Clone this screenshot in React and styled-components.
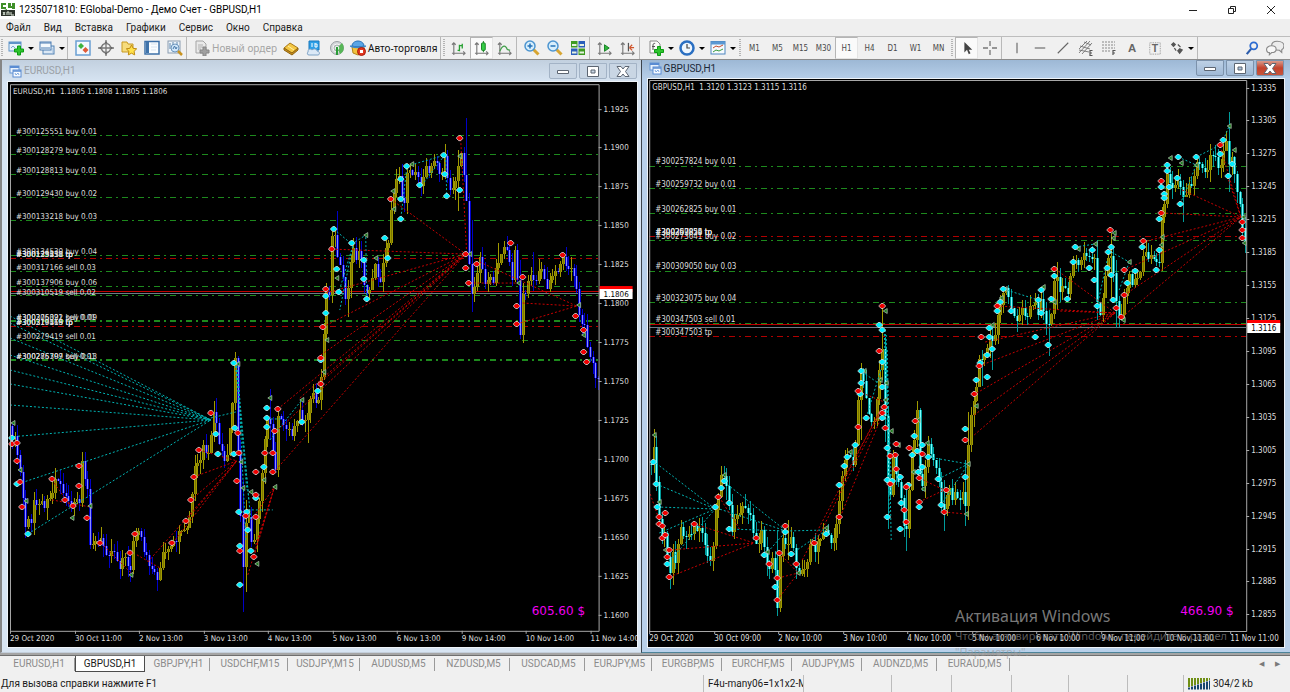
import React from "react";
import styled, { createGlobalStyle, css } from "styled-components";

const GlobalStyle = createGlobalStyle`
  * { box-sizing: border-box; }
  body {
    margin: 0;
    font-family: Roboto, "Noto Sans", sans-serif;
    font-size: 10px;
    color: #1b1b1b;
    background: #f0f0f0;
  }
  button { font: inherit; color: inherit; border: none; background: none; padding: 0; margin: 0; }
`

const Page = styled.div`
  position: relative;
  display: flex;
  flex-direction: column;
  height: 100vh;
  overflow: hidden;
`

const TitleBar = styled.header`
  display: flex;
  align-items: center;
  height: 19px;
  flex: none;
  padding-left: 1px;
  background: #fff;
`

const AppTitle = styled.h1`
  flex: 1;
  margin: 0 0 0 4px;
  font-size: 10px;
  font-weight: normal;
  line-height: 19px;
  color: #000;
`

const CaptionButton = styled.button`
  width: 39px;
  height: 19px;
  display: flex;
  align-items: center;
  justify-content: center;
`

const MenuBar = styled.nav`
  display: flex;
  align-items: center;
  gap: 13px;
  height: 18px;
  flex: none;
  padding-left: 6px;
  background: #efefef;
  border-bottom: 1px solid #bdbdbd;
`

const MenuItem = styled.button`
  line-height: 17px;
`

const ToolBar = styled.div`
  display: flex;
  align-items: stretch;
  height: 23px;
  flex: none;
  padding-right: 4px;
  background: #f0f0f0;
  border-bottom: 1px solid #8c8c8c;
`

const Grip = styled.span`
  width: 4px;
  flex: none;
  margin: 2px 0 2px 1px;
  background: repeating-linear-gradient(#b4b4b4 0 1px, #f0f0f0 1px 2px);
  border-right: 2px solid #f0f0f0;
`

const Sep = styled.span`
  width: ${(p) => p.$width || 4}px;
  flex: none;
  border-left: 1px solid #b9b9b9;
`

const ToolButton = styled.button`
  display: flex;
  align-items: center;
  justify-content: center;
  flex: none;
  width: ${(p) => p.$width || 23}px;
  ${(p) => p.$pressed && css`
    background: #fafafa;
    border: 1px solid #b5b5b5;
    border-right-color: #e4e4e4;
    border-bottom-color: #e4e4e4;
  `}
`

const WideButton = styled(ToolButton)`
  gap: 2px;
  justify-content: flex-start;
  padding-left: 2px;
  font-family: "Noto Sans", sans-serif;
  white-space: nowrap;
  color: ${(p) => (p.disabled ? "#a5a5a5" : "#111")};
`

const Caret = styled.span`
  margin-left: 4px;
  border: 3px solid transparent;
  border-top-color: #000;
  border-bottom: none;
`

const Period = styled(ToolButton)`
  font-family: "DejaVu Sans Condensed", "DejaVu Sans", sans-serif;
  font-size: 8px;
  color: #4a4a4a;
`

const Spacer = styled.span`
  flex: 1;
`

const Desktop = styled.main`
  flex: 1;
  display: flex;
  min-height: 0;
  padding-bottom: 2px;
  background: #a5a5a5;
`

const ChildWindow = styled.section`
  display: flex;
  flex-direction: column;
  min-width: 0;
  flex: ${(p) => (p.$active ? "649 649 0" : "641 641 0")};
  padding: 0 ${(p) => (p.$active ? "6px 5px 6px" : "4px 5px 6px")};
  border-left: ${(p) => (p.$active ? "1px solid #3c444c" : "2px solid #858585")};
  border-bottom: 1px solid ${(p) => (p.$active ? "#4d8499" : "#c4cfdb")};
  background: ${(p) => (p.$active
    ? "linear-gradient(#9db8d5, #b8d0ea 20px, #b8d0ea)"
    : "linear-gradient(#c2d0df, #d7e4f2 22px, #d7e4f2)")};
`

const ChildTitle = styled.div`
  display: flex;
  align-items: ${(p) => (p.$active ? "flex-start" : "center")};
  gap: 2px;
  flex: none;
  height: ${(p) => (p.$active ? 19 : 22)}px;
  color: ${(p) => (p.$active ? "#1d2a38" : "#9aa0a6")};
`

const ChildName = styled.h2`
  flex: 1;
  margin: 0;
  font-size: 10px;
  font-weight: normal;
  line-height: 18px;
`

const ChildIcon = styled.span`
  display: flex;
  padding: ${(p) => (p.$active ? "2px 0 0 1px" : "0 0 0 1px")};
`

const ChildButton = styled.button`
  display: flex;
  align-items: center;
  justify-content: center;
  width: 28px;
  height: 16px;
  border: 1px solid ${(p) => (p.$active ? "#7c92ab" : "#a3b3c6")};
  border-radius: 0 0 2px 2px;
  background: ${(p) => (p.$close
    ? "linear-gradient(#d99a8c, #c3422c 50%, #c8553c)"
    : p.$active ? "linear-gradient(#bdd0e5, #9fb9d6)" : "#c9d6e4")};
`

const ChartSvg = styled.svg`
  display: block;
  flex: 1;
  width: 100%;
  min-height: 0;
  background: #000;
  outline: 1px solid #eef3f8;
  font-family: "DejaVu Sans Condensed", "DejaVu Sans", sans-serif;
  font-size: 8px;
  fill: #dedede;
`

const Profit = styled.text`
  font-family: "DejaVu Sans", sans-serif;
  font-size: 12px;
  fill: #f000f0;
`

const Watermark = styled.aside`
  position: absolute;
  right: 51px;
  bottom: 32px;
  width: 284px;
  font-family: "Noto Sans", sans-serif;
  font-size: 11px;
  line-height: 16px;
  color: rgba(150, 150, 150, 0.62);
  pointer-events: none;

  strong {
    display: block;
    font-size: 16px;
    font-weight: normal;
    line-height: 24px;
    color: rgba(160, 160, 160, 0.75);
  }
`

const TabBar = styled.nav`
  display: flex;
  align-items: stretch;
  flex: none;
  height: 20px;
  padding: 0 5px 3px 1px;
  background: #f0f0f0;
  border-top: 1px solid #6f6f6f;
`

const Tab = styled.button`
  flex: none;
  width: ${(p) => p.$width}px;
  padding-left: 2px;
  color: #8b8b8b;
  line-height: 16px;
  background: linear-gradient(#9a9a9a, #9a9a9a) right 2px / 1px 13px no-repeat;
  ${(p) => p.$active && css`
    padding-left: 0;
    color: #1b1b1b;
    background: #fff;
    border: 1px solid #4c4c4c;
    border-top: none;
  `}
`

const TabArrow = styled.button`
  width: 16px;
  font-size: 7px;
  color: #7a7a7a;
`

const StatusBar = styled.footer`
  display: flex;
  align-items: stretch;
  height: 17px;
  flex: none;
  line-height: 17px;
  background: #f0f0f0;
`

const StatusHint = styled.span`
  flex: 1;
  padding-left: 1px;
`

const StatusCell = styled.span`
  width: ${(p) => p.$width}px;
  flex: none;
  overflow: hidden;
  white-space: nowrap;
  padding-left: 4px;
  border-left: 1px solid #bcbcbc;
`

const Traffic = styled(StatusCell)`
  display: flex;
  align-items: center;
  gap: 3px;
`

/* ---------- icons ---------- */

const Icon = ({ size = 16, children }) => (
  <svg width={size} height={size} viewBox="0 0 16 16" fill="none" aria-hidden="true">{children}</svg>
)

const Plus = ({ x = 0, y = 0 }) => (
  <path transform={`translate(${x} ${y})`} d="M3 0h3v3h3v3H6v3H3V6H0V3h3z" fill="#2fc32f" stroke="#0a9d12" />
)

const NewChart = () => <Icon><rect x="1" y="2" width="12" height="9" fill="#e9f2fb" stroke="#5f93c8" /><path d="M1 3h12" stroke="#5f93c8" strokeWidth="2" /><path d="M3 8l2-2 2 2" stroke="#7da8d0" /><Plus x={6.5} y={6} /></Icon>
const Profiles = () => <Icon><rect x="4" y="6" width="11" height="8" fill="#dbe8f5" stroke="#5383b5" /><rect x="1" y="2" width="11" height="8" fill="#f4f9fd" stroke="#4c7db2" /><path d="M1 3h11M2 8h9" stroke="#4c7db2" /><path d="M14 8v5" stroke="#9cbad8" /></Icon>
const Market = () => <Icon><rect x="1" y="1" width="14" height="14" fill="#f3f8fd" stroke="#6a9fd2" strokeWidth="1.5" /><path d="M6 3l3 3-3 3-3-3z" fill="#3eb33e" /><path d="M10.500 7l3 3-3 3-3-3z" fill="#e05a36" /></Icon>
const DataWindow = () => <Icon><circle cx="8" cy="8" r="4.500" stroke="#777" strokeWidth="1.500" /><path d="M8 0v16M0 8h16" stroke="#777" strokeWidth="1.300" /><path d="M8 1l-1.500 2h3zM8 15l-1.500-2h3zM1 8l2-1.500v3zM15 8l-2-1.500v3z" fill="#666" /></Icon>
const Navigator = () => <Icon><path d="M1 2h5l1 2h5v8H1z" fill="#f6dc7d" stroke="#c79a22" /><path d="M10.500 5l1.600 3.300 3.600.5-2.600 2.500.6 3.600-3.200-1.700-3.200 1.700.6-3.600-2.600-2.500 3.600-.5z" fill="#ffe14a" stroke="#bf8b13" /></Icon>
const Terminal = () => <Icon><rect x="1" y="1.500" width="14" height="12.500" fill="#fafdff" stroke="#3d70a8" strokeWidth="1.500" /><path d="M2 2h3v11H2z" fill="#3f73aa" /><path d="M7 4h6M7 7h6M7 10h5" stroke="#d7e4f1" /></Icon>
const Tester = () => <Icon><rect x="1" y="1" width="12" height="12" fill="#edf3f9" stroke="#8a9caf" /><path d="M3 3v6M6 2v5M10 2v4" stroke="#5f87ad" /><circle cx="8" cy="8" r="4" fill="#cfe6fa" stroke="#6d96bd" /><path d="M6 9l1.500-3L9 9l1-2" stroke="#4a79a8" /><path d="M11 11l4 4" stroke="#c8921f" strokeWidth="2.500" /></Icon>
const NewOrder = () => <Icon><path d="M2 1h7l3 3v9H2z" fill="#e9e9e9" stroke="#a5a5a5" /><path d="M4 5h5M4 7h5M4 9h3" stroke="#b0b0b0" /><path d="M9 7h3v3h3v3h-3v3H9v-3H6v-3h3z" fill="#a0a0a0" stroke="#868686" /></Icon>
const Book = () => <Icon><path d="M1 8l6-5 8 5-6 6z" fill="#f4c743" stroke="#a8791b" /><path d="M1 8v2l8 5 6-5V8l-6 5z" fill="#c98e1c" stroke="#8f6411" /><path d="M5 6l6 4" stroke="#fff0a8" /></Icon>
const Community = () => <Icon><path d="M3 1h10v9H3z" fill="#2da0e8" stroke="#1a78bd" /><path d="M6 3v4M9 3v4h2V4H9" stroke="#fff" /><path d="M2 12c0-4 3-3 4-2 2-2 5-1 5 1 3 0 3 4 1 4H3c-2 0-2-2-1-3z" fill="#dce9f6" stroke="#7fa3c6" /></Icon>
const Signals = () => <Icon><circle cx="8" cy="8" r="6.500" fill="#d3d6d9" stroke="#9a9fa3" /><circle cx="8" cy="8" r="4" fill="#aab0b3" stroke="#f5f5f5" /><path d="M8 8l5-5c3 4 2 9-2 11z" fill="#57b657" /><circle cx="8" cy="8" r="1.800" fill="#2a9b37" stroke="#fff" /><path d="M8 9v6" stroke="#2a9b37" strokeWidth="2" /></Icon>
const AutoTrade = () => <Icon><path d="M2 7l6-2 6 2-1 6-5 2-5-2z" fill="#f1c23c" stroke="#b2851c" /><path d="M2 6c0-3 3-5 6-5s6 2 6 5c-3 1-9 1-12 0z" fill="#5aa5e5" stroke="#2b73b7" /><path d="M0 6c5 2 11 2 16 0" stroke="#3a88cc" strokeWidth="1.500" /><circle cx="11.500" cy="11.500" r="4" fill="#e2371f" stroke="#a81c0c" /><rect x="10" y="10" width="3" height="3" fill="#fff" /></Icon>

const axes = <path d="M3 2v13M1 13h14M1 4l2-2 2 2M13 11l2 2-2 2" stroke="#777" strokeWidth="1.200" />
const Bars = () => <Icon size={15}>{axes}<path d="M9 4v7M7 10h2M9 5h3M12 3v5" stroke="#27a032" strokeWidth="1.400" /></Icon>
const Candles = () => <Icon size={15}>{axes}<path d="M10 0v12" stroke="#15801f" /><rect x="8" y="2" width="4" height="8" rx="1" fill="#35cd46" stroke="#158022" /></Icon>
const Line = () => <Icon size={15}>{axes}<path d="M3 11c3-7 6-7 8-2l3 1" stroke="#43a04c" strokeWidth="1.300" /></Icon>
const Lens = ({ minus }) => <Icon><path d="M9.500 9.500l5 5" stroke="#d7a531" strokeWidth="3" /><circle cx="6" cy="6" r="5" fill="#d8effc" stroke="#4d95d0" strokeWidth="1.500" /><path d={minus ? "M3.500 6h5" : "M3.500 6h5M6 3.500v5"} stroke="#2573b9" strokeWidth="1.500" /></Icon>
const Tile = () => <Icon><rect x="1" y="1" width="6.500" height="6.500" fill="#3f9b22" /><rect x="8.500" y="1" width="6.500" height="6.500" fill="#2b5fbb" /><rect x="1" y="8.500" width="6.500" height="6.500" fill="#2b5fbb" /><rect x="8.500" y="8.500" width="6.500" height="6.500" fill="#3f9b22" /><path d="M2 5h4.500M9.500 5H14M2 12.500h4.500M9.500 12.500H14" stroke="#e6f2e0" strokeWidth="2" /></Icon>
const AutoScroll = () => <Icon size={15}>{axes}<path d="M8 4l5 3.500L8 11z" fill="#2fb53c" stroke="#158022" /></Icon>
const Shift = () => <Icon size={15}>{axes}<path d="M9 2v9" stroke="#555" strokeWidth="1.300" /><path d="M10 7h5M10 7l3-3M10 7l3 3" stroke="#d0552c" strokeWidth="1.300" /></Icon>
const Indicators = () => <Icon><path d="M2 1h7l3 3v9H2z" fill="#fafafa" stroke="#8a8a8a" /><path d="M5 10V5c0-2 2-2 2-1M4 6.500h3" stroke="#555" /><Plus x={6.500} y={6.500} /></Icon>
const Clock = () => <Icon><circle cx="8" cy="8" r="6.500" fill="#eef6fe" stroke="#2a6fc2" strokeWidth="2.500" /><path d="M8 4v4h3" stroke="#444" strokeWidth="1.200" /></Icon>
const Template = () => <Icon><rect x="1" y="1.500" width="14" height="12.500" fill="#f6fafe" stroke="#4c86bf" /><path d="M1 3h14" stroke="#5a98d3" strokeWidth="3" /><path d="M3 8l3-2 3 1 4-2" stroke="#c44a2d" /><path d="M3 12l3-2 3 1 4-2" stroke="#3a9b3f" /></Icon>
const Cursor = () => <Icon size={14}><path d="M5 1v12l3-3 2 5 2-1-2-4h4z" fill="#444" /></Icon>
const Cross = () => <Icon><path d="M8 1v5M8 10v5M1 8h5M10 8h5" stroke="#777" strokeWidth="1.300" /></Icon>
const Stroke = ({ d }) => <Icon size={14}><path d={d} stroke="#666" strokeWidth="1.300" /></Icon>
const Channel = () => <Icon><path d="M1 13L12 1M4 14L14 3M1 9L9 1M2 6l10 3M1 10l10 2M6 2l7 3" stroke="#666" strokeWidth="0.800" /><path d="M14.500 10.500H12v5h2.500M12 13h2" stroke="#555" strokeWidth="1.200" /></Icon>
const Fibo = () => <Icon><path d="M1 2h13M1 5h13M1 8h13M1 11h8" stroke="#888" strokeDasharray="2 1" /><path d="M14.500 10.500H12V15M12 13h2" stroke="#555" strokeWidth="1.200" /></Icon>
const TextTool = ({ boxed }) => (
  <Icon size={14}>
    {boxed && <rect x="2" y="2" width="12" height="13" stroke="#888" strokeDasharray="1 1" />}
    <text x="8" y="13" textAnchor="middle" fontFamily="Liberation Sans" fontWeight="bold" fontSize={boxed ? 12 : 13} fill="#666">{boxed ? "T" : "A"}</text>
  </Icon>
)
const Arrows = () => <Icon size={14}><path d="M4 1l3 3-3 3-3-3zM11 8l4 2-4 5-3-4z" fill="#555" /><path d="M5 8l2 3M9 4l3 3" stroke="#555" strokeWidth="1.500" /></Icon>
const Search = () => <Icon size={14}><circle cx="10" cy="5.500" r="4" stroke="#2c6bd1" strokeWidth="2" /><path d="M7 9l-5 6" stroke="#2c5cab" strokeWidth="2.500" /></Icon>
const Chat = () => <Icon size={18}><path d="M10 2c4 0 6 2 6 4s-1 3-2 3.500V12l-2-2c-4 0-7-1-7-4s2-4 5-4z" fill="#ececec" stroke="#8a8a8a" /><path d="M5 6c3 0 4 1.500 4 3s-1 3-4 3l-2 2v-2C1 12 .500 10 .500 9S2 6 5 6z" fill="#f8f8f8" stroke="#8a8a8a" /></Icon>

const AppLogo = () => (
  <svg width="14" height="15" viewBox="0 0 14 15" aria-hidden="true">
    <path d="M0 1h5v2H2v2h3v2H0zM7 1h3v3h1V1h3v6h-3V6H7zM0 9l6-2v3l-3 3H0z" fill="#3f8f28" />
    <path d="M0 8h14v6H0z" fill="#2c332b" />
    <path d="M2 10l2 3M4 10l-2 3M6 13v-3h2v3M10 10v3h3" stroke="#dfe9db" fill="none" />
  </svg>
)

const WindowGlyph = () => (
  <svg width="13" height="13" viewBox="0 0 13 13" fill="none" aria-hidden="true">
    <rect x="1" y="1" width="9" height="7" fill="#eaf3fd" stroke="#6797d6" />
    <path d="M1 2h9" stroke="#5a8cd2" strokeWidth="2" />
    <rect x="4" y="5" width="8" height="7" fill="#f6faff" stroke="#5a8cd2" />
    <path d="M4 6h8" stroke="#5a8cd2" strokeWidth="1.500" />
    <path d="M6 8l1 2 2-2 1 2" stroke="#7ea9df" />
  </svg>
)

const glyphs = {
  min: <path d="M1.500 5.500h11v3h-11z" fill="#fff" stroke="#5d6672" />,
  max: <path d="M1.500 1.500h11v10h-11zM5 5h4v3h-4z" fill="#fff" fillRule="evenodd" stroke="#5d6672" />,
  close: <path d="M1 1.500h4l2 2.500 2-2.500h4L9.500 6.500l3.500 5H9L7 9l-2 2.500H1l3.500-5z" fill="#fff" stroke="#5d6672" />,
}

const Glyph = ({ kind }) => <svg width="14" height="13" viewBox="0 0 14 13" aria-hidden="true">{glyphs[kind]}</svg>

/* ---------- chart data ---------- */

const eurusd = {
  view: "8 82 629 565",
  left: 10, right: 599, top: 84, bottom: 631,
  symbol: "EURUSD,H1  1.1805 1.1808 1.1805 1.1806",
  scale: { from: 11925, step: 25, count: 14, y: 108.5, dy: 38.96 },
  dates: ["29 Oct 2020", "30 Oct 11:00", "2 Nov 13:00", "3 Nov 13:00", "4 Nov 13:00", "5 Nov 13:00", "6 Nov 13:00", "9 Nov 14:00", "10 Nov 14:00", "11 Nov 14:00"],
  profit: [532, "605.60 $"],
  bid: [293, "1.1806"],
  ask: 291,
  colors: { down: "#0000c8", core: "#8c8cff" },
  levels: [
    [135], [154], [174], [197], [220], [255], [258, 1], [271], [286], [295], [320], [321], [326, 1], [340], [359], [360],
  ],
  labels: [
    [134, "#300125551 buy 0.01"], [153, "#300128279 buy 0.01"], [173, "#300128813 buy 0.01"], [196, "#300129430 buy 0.02"],
    [219, "#300133218 buy 0.03"], [254, "#300134530 buy 0.04"], [257, "#300125551 tp"], [257, "#300133218 tp"], [257, "#300129430 tp"],
    [270, "#300317166 sell 0.03"], [285, "#300137906 buy 0.06"], [295, "#300310519 sell 0.02"], [320, "#300306022 sell 0.01"],
    [320, "#300275391 buy 0.09"], [325, "#300279419 tp"], [325, "#300317166 tp"], [325, "#300310519 tp"],
    [339, "#300279419 sell 0.01"], [359, "#300275709 sell 0.01"], [359, "#300286397 buy 0.13"],
  ],
  path: [
    [11, 432], [15, 440], [18, 462], [22, 485], [25, 526], [28, 522], [31, 525], [34, 500], [40, 501], [43, 506], [47, 496],
    [50, 499], [53, 484], [57, 476], [60, 486], [64, 492], [69, 501], [72, 511], [76, 500], [79, 503], [81, 460], [84, 478],
    [87, 490], [90, 540], [95, 543], [101, 541], [104, 547], [108, 553], [114, 549], [119, 568], [123, 556], [127, 563],
    [130, 567], [133, 543], [137, 532], [141, 541], [145, 558], [149, 563], [156, 577], [159, 574], [162, 556], [170, 551],
    [177, 537], [185, 534], [189, 520], [192, 495], [195, 468], [200, 460], [203, 448], [207, 461], [210, 445], [213, 412],
    [216, 421], [219, 447], [223, 459], [227, 456], [230, 432], [232, 405], [235, 362], [237, 420], [239, 482], [242, 585],
    [245, 535], [248, 500], [252, 552], [255, 540], [258, 508], [262, 470], [266, 425], [268, 405], [272, 450], [275, 470],
    [278, 418], [281, 415], [284, 437], [288, 428], [292, 432], [297, 420], [300, 408], [303, 420], [306, 424], [309, 405],
    [313, 398], [317, 405], [320, 392], [323, 348], [326, 293], [329, 290], [332, 238], [335, 232], [338, 262], [342, 275],
    [346, 304], [350, 275], [353, 244], [356, 262], [360, 248], [363, 272], [366, 302], [370, 285], [374, 265], [378, 274],
    [381, 281], [384, 258], [388, 240], [392, 196], [396, 183], [400, 170], [403, 207], [407, 172], [411, 169], [415, 177],
    [419, 182], [422, 185], [425, 160], [429, 168], [433, 163], [437, 165], [441, 175], [445, 160], [449, 195], [453, 188],
    [457, 170], [460, 150], [463, 157], [466, 206], [469, 262], [472, 290], [476, 278], [480, 256], [484, 288], [488, 275],
    [492, 282], [496, 268], [501, 251], [506, 252], [509, 258], [512, 278], [515, 250], [518, 300], [520, 334], [523, 296],
    [527, 290], [531, 270], [535, 288], [539, 268], [543, 276], [548, 291], [552, 276], [558, 268], [562, 258], [567, 263],
    [573, 272], [576, 292], [580, 318], [584, 324], [587, 350], [590, 352], [594, 372], [597, 380],
  ],
  spikes: [[55, 468, 490], [81, 453, 507], [130, 550, 582], [215, 398, 430], [236, 352, 400], [242, 480, 612], [269, 389, 440], [246, 500, 592], [337, 211, 250], [347, 280, 317], [465, 118, 190], [471, 220, 312], [520, 260, 336], [533, 252, 290], [458, 150, 211], [498, 243, 270], [307, 400, 443]],
  rays: [
    ...[316, 323, 338, 355, 370, 384, 405, 437].map((y) => [10, y, 211, 420]),
    [18, 484, 211, 420], [28, 534, 211, 420], [211, 418, 236, 412], [236, 366, 247, 490], [237, 366, 249, 500], [236, 366, 251, 520], [238, 370, 246, 540],
    [334, 229, 352, 244], [352, 244, 366, 235], [353, 246, 339, 292], [353, 246, 340, 310], [366, 237, 367, 299], [407, 166, 445, 155],
    [445, 155, 423, 184], [446, 156, 447, 196], [407, 168, 401, 219], [267, 419, 283, 419], [270, 440, 302, 400], [248, 510, 273, 510],
  ],
  redRays: [
    [391, 199], [332, 249], [326, 293], [323, 327], [321, 355], [319, 384], [300, 398], [278, 409], [276, 432], [276, 470],
  ].map(([x, y]) => [x, y, 466, 254]).concat(
    [[194, 477], [191, 500], [186, 521], [173, 543], [199, 450], [148, 562]].map(([x, y]) => [x, y, 237, 461]),
    [[252, 520], [256, 545], [254, 557], [248, 575]].map(([x, y]) => [x, y, 275, 486]),
    [[523, 303], [517, 324], [480, 262]].map(([x, y]) => [x, y, 577, 306]),
    [[470, 283, 519, 283], [461, 139, 467, 254], [52, 480, 72, 508], [52, 500, 90, 507], [101, 543, 131, 573], [137, 555, 160, 568]],
  ),
  red: [[12, 444], [17, 443], [17, 461], [20, 482], [22, 507], [52, 479], [65, 500], [73, 506], [79, 466], [79, 486], [87, 518], [100, 543], [130, 553], [135, 534], [172, 543], [186, 521], [191, 500], [194, 477], [199, 450], [211, 413], [238, 433], [239, 453], [237, 481], [256, 472], [273, 453], [273, 472], [265, 453], [278, 409], [275, 431], [256, 495], [246, 516], [256, 517], [254, 557], [240, 551], [460, 138], [391, 199], [332, 249], [326, 289], [323, 327], [321, 358], [321, 384], [466, 254], [466, 268], [469, 283], [477, 264], [511, 243], [523, 277], [517, 306], [517, 324], [563, 255], [576, 316], [584, 330], [584, 352], [587, 362]],
  cyan: [[12, 438], [17, 484], [28, 534], [216, 434], [218, 454], [234, 454], [235, 428], [234, 363], [239, 512], [240, 546], [240, 585], [251, 551], [248, 530], [247, 512], [267, 408], [267, 418], [267, 427], [264, 467], [256, 498], [302, 422], [334, 229], [337, 269], [339, 292], [326, 296], [326, 313], [321, 360], [318, 391], [352, 243], [364, 260], [364, 279], [367, 299], [385, 238], [388, 258], [401, 219], [407, 166], [401, 179], [401, 199], [420, 185], [444, 155], [447, 196], [460, 190], [445, 174]],
  green: [[13, 423], [20, 470], [26, 501], [72, 518], [90, 506], [131, 575], [241, 462], [243, 488], [251, 492], [270, 398], [257, 564], [275, 487], [302, 400], [264, 480], [238, 364], [366, 235], [376, 258], [337, 278], [327, 340], [324, 372], [394, 209], [393, 191], [412, 164], [460, 156], [470, 254], [519, 283], [579, 305], [584, 335]],
}

const gbpusd = {
  view: "648 79 636 568",
  left: 649, right: 1246, top: 80, bottom: 631,
  symbol: "GBPUSD,H1  1.3120 1.3123 1.3115 1.3116",
  scale: { from: 13335, step: 30, count: 17, y: 87.5, dy: 32.93 },
  dates: ["29 Oct 2020", "30 Oct 09:00", "2 Nov 10:00", "3 Nov 10:00", "4 Nov 10:00", "5 Nov 10:00", "6 Nov 10:00", "9 Nov 11:00", "10 Nov 11:00", "11 Nov 11:00"],
  profit: [1180, "466.90 $"],
  bid: [327, "1.3116"],
  ask: 324,
  colors: { down: "#009c9c", core: "#7dffff" },
  levels: [[166], [188], [213], [236, 1], [240], [271], [302], [323], [336, 1]],
  labels: [
    [164, "#300257824 buy 0.01"], [187, "#300259732 buy 0.01"], [212, "#300262825 buy 0.01"], [235, "#300257824 tp"],
    [235, "#300309050 tp"], [235, "#300262855 tp"], [239, "#300273641 buy 0.02"], [269, "#300309050 buy 0.03"],
    [301, "#300323075 buy 0.04"], [322, "#300347503 sell 0.01"], [335, "#300347503 tp"],
  ],
  path: [
    [650, 470], [653, 440], [655, 462], [657, 500], [659, 520], [662, 536], [665, 530], [667, 560], [670, 575], [673, 552],
    [676, 562], [679, 530], [684, 531], [688, 537], [693, 525], [697, 530], [703, 530], [706, 552], [710, 562], [713, 550],
    [716, 512], [719, 490], [722, 475], [725, 482], [729, 500], [732, 530], [736, 512], [739, 522], [742, 505], [746, 503],
    [750, 515], [754, 535], [757, 547], [761, 530], [764, 550], [768, 568], [772, 560], [775, 570], [777, 612], [780, 560],
    [783, 540], [786, 552], [790, 530], [794, 555], [798, 574], [803, 573], [807, 565], [810, 547], [816, 549], [822, 540],
    [826, 529], [830, 546], [834, 540], [838, 510], [841, 484], [845, 465], [849, 452], [853, 468], [856, 430], [859, 390],
    [862, 372], [865, 392], [869, 418], [873, 430], [876, 415], [879, 370], [881, 325], [884, 400], [887, 450], [889, 510],
    [892, 455], [895, 470], [898, 480], [902, 500], [905, 535], [908, 505], [911, 470], [914, 440], [917, 412], [920, 470],
    [923, 500], [926, 455], [929, 438], [933, 462], [938, 470], [941, 500], [944, 512], [948, 488], [952, 505], [955, 492],
    [959, 505], [963, 488], [966, 516], [968, 440], [972, 410], [975, 392], [978, 362], [982, 365], [985, 345], [988, 352],
    [991, 332], [994, 345], [997, 322], [1000, 302], [1003, 290], [1007, 294], [1011, 305], [1015, 325], [1020, 308],
    [1026, 318], [1031, 300], [1034, 302], [1037, 318], [1041, 296], [1045, 318], [1048, 332], [1051, 310], [1053, 290],
    [1056, 278], [1060, 290], [1064, 282], [1068, 290], [1071, 268], [1075, 262], [1081, 260], [1086, 256], [1090, 262],
    [1094, 256], [1097, 300], [1100, 315], [1104, 290], [1107, 262], [1110, 244], [1113, 270], [1117, 312], [1121, 318],
    [1125, 290], [1129, 276], [1133, 282], [1138, 275], [1142, 262], [1146, 256], [1152, 252], [1156, 266], [1159, 262],
    [1162, 220], [1165, 195], [1168, 170], [1171, 182], [1174, 195], [1177, 172], [1180, 190], [1184, 200], [1188, 188],
    [1193, 184], [1197, 158], [1202, 170], [1206, 168], [1210, 156], [1215, 160], [1220, 168], [1223, 150], [1227, 142],
    [1230, 168], [1233, 158], [1236, 195], [1239, 190], [1242, 228], [1245, 244],
  ],
  spikes: [[653, 429, 470], [670, 550, 589], [777, 530, 616], [726, 469, 500], [789, 520, 560], [860, 366, 440], [882, 306, 380], [888, 440, 529], [905, 490, 551], [917, 401, 440], [885, 372, 442], [966, 460, 526], [969, 412, 520], [1050, 310, 356], [1117, 260, 328], [1110, 233, 300], [1056, 262, 310], [1096, 240, 320], [1228, 112, 192], [1182, 180, 222], [944, 480, 531], [982, 350, 386], [993, 325, 370]],
  rays: [
    [653, 461, 715, 509], [656, 484, 715, 509], [657, 507, 715, 509], [659, 533, 715, 509], [672, 558, 715, 509], [724, 482, 786, 531], [729, 529, 786, 531],
    [716, 508, 786, 531], [786, 531, 826, 530], [765, 555, 786, 531], [791, 554, 826, 530], [884, 330, 888, 448], [885, 330, 891, 480],
    [886, 335, 889, 517], [887, 350, 891, 540], [862, 372, 878, 383], [883, 362, 866, 418], [928, 457, 968, 464], [938, 479, 968, 464], [941, 505, 968, 464],
    [1003, 289, 1035, 299], [1075, 247, 1095, 244], [1111, 252, 1129, 262], [1129, 262, 1119, 290], [1097, 306, 1107, 260], [1178, 157, 1196, 165],
    [1180, 204, 1196, 165], [1196, 157, 1220, 145], [1223, 140, 1229, 126],
  ],
  redRays: [
    [650, 494, 659, 520], [671, 550, 754, 543], [694, 524, 754, 543], [669, 577, 754, 543], [719, 497, 740, 530], [778, 578, 798, 573],
    [777, 600, 798, 573], [779, 553, 798, 573], [802, 560, 883, 405], [815, 543, 883, 408], [839, 487, 883, 405], [840, 517, 884, 410], [862, 393, 884, 402],
    [919, 502, 944, 490], [919, 478, 948, 492], [944, 512, 966, 514], [1220, 146, 1241, 218], [1227, 176, 1241, 218],
  ].concat(
    [[974, 435], [974, 415], [973, 395], [979, 366], [985, 342], [997, 306], [1055, 269], [1060, 311]].map(([x, y]) => [x, y, 1115, 313]),
    [[1162, 213], [1182, 190], [1124, 270], [1124, 295], [1122, 317], [1143, 242]].map(([x, y]) => [x, y, 1241, 217]),
  ),
  red: [[659, 517], [659, 524], [662, 526], [662, 538], [665, 513], [665, 535], [667, 557], [669, 550], [669, 577], [694, 524], [718, 497], [756, 538], [785, 526], [779, 553], [777, 578], [777, 600], [796, 564], [814, 543], [769, 564], [839, 517], [858, 391], [858, 427], [884, 407], [882, 413], [885, 428], [896, 444], [895, 455], [890, 456], [896, 469], [890, 484], [906, 487], [904, 510], [906, 522], [915, 421], [909, 448], [922, 454], [919, 478], [919, 502], [946, 490], [944, 512], [965, 440], [882, 306], [879, 351], [981, 337], [979, 366], [974, 394], [997, 306], [1054, 269], [1110, 230], [1143, 241], [1124, 270], [1124, 295], [1116, 308], [1121, 317], [1161, 181], [1161, 213], [1220, 145], [1242, 222], [1242, 230], [1242, 238]],
  cyan: [[653, 462], [656, 484], [657, 507], [667, 564], [715, 507], [721, 488], [724, 481], [729, 503], [729, 529], [764, 555], [775, 587], [785, 532], [791, 554], [826, 534], [839, 485], [844, 466], [847, 457], [855, 445], [861, 383], [861, 371], [860, 394], [866, 418], [882, 387], [882, 418], [887, 448], [887, 480], [887, 517], [892, 481], [900, 477], [901, 503], [900, 529], [908, 485], [912, 455], [914, 436], [917, 451], [922, 445], [922, 467], [918, 472], [928, 457], [919, 507], [938, 479], [941, 505], [965, 429], [965, 477], [879, 325], [882, 330], [882, 362], [976, 380], [980, 363], [987, 355], [989, 337], [989, 328], [992, 349], [997, 311], [1000, 302], [1003, 289], [987, 377], [1011, 311], [1035, 337], [1038, 300], [1041, 290], [1041, 313], [1051, 299], [1048, 345], [1054, 276], [1067, 299], [1073, 262], [1075, 247], [1089, 268], [1092, 250], [1094, 280], [1097, 306], [1108, 252], [1111, 247], [1107, 268], [1111, 275], [1113, 300], [1135, 271], [1127, 283], [1142, 247], [1156, 270], [1159, 250], [1159, 219], [1161, 187], [1164, 194], [1164, 198], [1167, 165], [1167, 171], [1169, 187], [1178, 157], [1177, 178], [1180, 204], [1196, 157], [1220, 154], [1223, 140], [1228, 176], [1232, 164]],
  green: [[654, 435], [659, 502], [665, 550], [724, 475], [767, 552], [826, 528], [850, 452], [864, 371], [891, 431], [885, 400], [886, 383], [898, 445], [798, 573], [913, 472], [918, 420], [927, 443], [923, 489], [968, 464], [966, 514], [976, 406], [885, 311], [880, 380], [1001, 298], [1005, 289], [992, 325], [1043, 287], [1054, 302], [1078, 249], [1095, 244], [1114, 233], [1113, 238], [1129, 262], [1123, 320], [1162, 237], [1170, 158], [1181, 163], [1196, 165], [1229, 126], [1234, 150], [1243, 217], [1244, 243], [1161, 245]],
}

const BAR = 64.5 / 24

const noise = (n) => {
  const v = Math.sin(n * 12.9898) * 43758.5453
  return v - Math.floor(v)
}

const priceAt = (path, x) => {
  const i = path.findIndex((p) => p[0] >= x)
  if (i <= 0) return path[i === 0 ? 0 : path.length - 1][1]
  const [x0, y0] = path[i - 1]
  const [x1, y1] = path[i]
  return y0 + ((y1 - y0) * (x - x0)) / (x1 - x0)
}

const buildBars = ({ path, spikes, left, right }) => {
  const bars = []
  let open = path[0][1] - 6
  for (let i = 0; left + 2 + i * BAR < right; i++) {
    const x = Math.round(left + 2 + i * BAR)
    const close = priceAt(path, x) + (noise(i + 1) - 0.5) * 10
    const spike = spikes.find((s) => Math.round((s[0] - left - 2) / BAR) === i)
    let high = Math.min(open, close) - noise(i + 300) * 12
    let low = Math.max(open, close) + noise(i + 700) * 12
    if (spike) {
      high = Math.min(high, spike[1])
      low = Math.max(low, spike[2])
    }
    bars.push({ x, up: close < open, top: Math.min(open, close), bottom: Math.max(open, close), high, low })
    open = close
  }
  return bars
}

const Bar = ({ bar, colors }) => {
  const h = Math.max(1, bar.bottom - bar.top)
  const edge = bar.up ? "#a09a00" : colors.down
  return (
    <g>
      <rect x={bar.x} y={bar.high} width="1" height={bar.low - bar.high} fill={edge} />
      <rect x={bar.x - 1} y={bar.top} width="3" height={h} fill={edge} />
      <rect x={bar.x} y={bar.top} width="1" height={h} fill={bar.up ? "#7d7800" : colors.core} />
    </g>
  )
}

const Dot = ({ at: [x, y], fill }) => (
  <path d={`M${x - 1} ${y - 2.5}h2l2 2v1l-2 2h-2l-2 -2v-1z`} fill={fill} stroke="#d8e4e4" strokeWidth="0.800" />
)

const Chart = ({ data }) => {
  const { left, right, top, bottom, scale } = data
  return (
    <ChartSvg viewBox={data.view} role="img" aria-label={data.symbol}>
      <g shapeRendering="crispEdges" fill="none">
        {data.levels.map(([y, stop]) => (
          <path key={y} d={`M${left} ${y + 0.5}H${right}`} stroke={stop ? "#b00000" : "#1d8a1d"} strokeDasharray="6 4 2 4" />
        ))}
        <path d={`M${left} ${data.ask + 0.5}H${right}`} stroke="#c00000" />
        <path d={`M${left} ${data.bid[0] + 0.5}H${right}`} stroke="#6e7a86" />
      </g>
      <g shapeRendering="crispEdges">
        {buildBars(data).map((bar) => <Bar key={bar.x} bar={bar} colors={data.colors} />)}
      </g>
      <g fill="none" strokeDasharray="2 2">
        {data.rays.map((r, i) => <path key={i} d={`M${r[0]} ${r[1]}L${r[2]} ${r[3]}`} stroke="#00b4b4" />)}
        {data.redRays.map((r, i) => <path key={i} d={`M${r[0]} ${r[1]}L${r[2]} ${r[3]}`} stroke="#c80000" />)}
      </g>
      {data.green.map(([x, y]) => <path key={`${x} ${y}`} d={`M${x + 2} ${y - 2.5}v5l-4 -2.500z`} fill="#1c7c1c" stroke="#b9c9b9" strokeWidth="0.700" />)}
      {data.cyan.map((at) => <Dot key={at.join()} at={at} fill="#00f0ff" />)}
      {data.red.map((at) => <Dot key={at.join()} at={at} fill="#f00000" />)}

      {data.labels.map(([y, text]) => <text key={y + text} x={left + 6} y={y}>{text}</text>)}
      <text x={left + 3} y={top + 10} xmlSpace="preserve">{data.symbol}</text>
      <Profit x={data.profit[0]} y="615">{data.profit[1]}</Profit>

      <path d={`M${left + 0.5} ${bottom}V${top + 0.5}H${right + 0.5}V${bottom + 0.5}H${left}`} fill="none" stroke="#a8a8a8" />
      {Array.from({ length: scale.count }, (_, i) => {
        const y = Math.round(scale.y + i * scale.dy)
        return (
          <g key={i}>
            <path d={`M${right} ${y + 0.5}h3`} stroke="#a8a8a8" />
            <text x={right + 5} y={y + 3}>{((scale.from - i * scale.step) / 10000).toFixed(4)}</text>
          </g>
        )
      })}
      {data.dates.map((date, i) => (
        <g key={date}>
          <path d={`M${Math.round(left + i * 64.5) + 0.5} ${bottom}v3`} stroke="#a8a8a8" />
          <text x={Math.round(left + i * 64.5)} y="641">{date}</text>
        </g>
      ))}
      <rect x={right + 1} y={data.bid[0] - 7} width="33" height="6" fill="#f00" />
      <rect x={right + 1} y={data.bid[0] - 4} width="33" height="10" fill="#fff" />
      <text x={right + 5} y={data.bid[0] + 4} fill="#000">{data.bid[1]}</text>
    </ChartSvg>
  )
}

const ChartWindow = ({ name, data, active }) => (
  <ChildWindow $active={active} aria-label={name}>
    <ChildTitle $active={active}>
      <ChildIcon $active={active}><WindowGlyph /></ChildIcon>
      <ChildName>{name}</ChildName>
      <ChildButton $active={active} aria-label="Свернуть"><Glyph kind="min" /></ChildButton>
      <ChildButton $active={active} aria-label="Развернуть"><Glyph kind="max" /></ChildButton>
      <ChildButton $active={active} $close={active} aria-label="Закрыть"><Glyph kind="close" /></ChildButton>
    </ChildTitle>
    <Chart data={data} />
  </ChildWindow>
)

/* ---------- shell ---------- */

const menu = ["Файл", "Вид", "Вставка", "Графики", "Сервис", "Окно", "Справка"]
const periods = ["M1", "M5", "M15", "M30", "H1", "H4", "D1", "W1", "MN"]
const tabs = [
  ["EURUSD,H1", 74], ["GBPUSD,H1", 70], ["GBPJPY,H1", 65], ["USDCHF,M15", 78], ["USDJPY,M15", 72], ["AUDUSD,M5", 75],
  ["NZDUSD,M5", 75], ["USDCAD,M5", 75], ["EURJPY,M5", 67], ["EURGBP,M5", 70], ["EURCHF,M5", 70], ["AUDJPY,M5", 70],
  ["AUDNZD,M5", 75], ["EURAUD,M5", 73],
]

const Tool = ({ label, menu: hasMenu, children, ...rest }) => (
  <ToolButton aria-label={label} $width={hasMenu ? 31 : 23} {...rest}>
    {children}
    {hasMenu && <Caret />}
  </ToolButton>
)

function App() {
  return (
    <Page>
      <GlobalStyle />
      <TitleBar>
        <AppLogo />
        <AppTitle>1235071810: EGlobal-Demo - Демо Счет - GBPUSD,H1</AppTitle>
        <CaptionButton aria-label="Свернуть"><svg width="10" height="10"><path d="M1 5.500h8" stroke="#222" /></svg></CaptionButton>
        <CaptionButton aria-label="Восстановить"><svg width="10" height="10" fill="none"><path d="M1.500 3.500h5v5h-5zM3.500 3V1.500h5v5H7" stroke="#222" /></svg></CaptionButton>
        <CaptionButton aria-label="Закрыть"><svg width="10" height="10"><path d="M1 1l8 8M9 1L1 9" stroke="#222" /></svg></CaptionButton>
      </TitleBar>
      <MenuBar>
        {menu.map((item) => <MenuItem key={item}>{item}</MenuItem>)}
      </MenuBar>
      <ToolBar>
        <Grip />
        <Tool label="Новый график" menu><NewChart /></Tool>
        <Tool label="Профили" menu><Profiles /></Tool>
        <Sep />
        <Tool label="Обзор рынка"><Market /></Tool>
        <Tool label="Окно данных"><DataWindow /></Tool>
        <Tool label="Навигатор"><Navigator /></Tool>
        <Tool label="Терминал"><Terminal /></Tool>
        <Tool label="Тестер"><Tester /></Tool>
        <Sep $width={6} />
        <WideButton $width={87} disabled><NewOrder />Новый ордер</WideButton>
        <Tool label="MetaEditor"><Book /></Tool>
        <Tool label="Сообщество"><Community /></Tool>
        <Tool label="Сигналы"><Signals /></Tool>
        <WideButton $width={92}><AutoTrade />Авто-торговля</WideButton>
        <Sep $width={2} />
        <Grip />
        <Tool label="Бары"><Bars /></Tool>
        <Tool label="Свечи" $pressed><Candles /></Tool>
        <Tool label="Линия"><Line /></Tool>
        <Sep />
        <Tool label="Увеличить"><Lens /></Tool>
        <Tool label="Уменьшить"><Lens minus /></Tool>
        <Tool label="Окна мозаикой"><Tile /></Tool>
        <Sep />
        <Tool label="Автопрокрутка"><AutoScroll /></Tool>
        <Tool label="Сдвиг графика"><Shift /></Tool>
        <Sep $width={6} />
        <Tool label="Индикаторы" menu><Indicators /></Tool>
        <Tool label="Периоды" menu><Clock /></Tool>
        <Tool label="Шаблоны" menu><Template /></Tool>
        <Grip />
        {periods.map((p) => <Period key={p} $pressed={p === "H1"}>{p}</Period>)}
        <Grip />
        <Tool label="Курсор" $pressed><Cursor /></Tool>
        <Tool label="Перекрестие"><Cross /></Tool>
        <Sep />
        <Tool label="Вертикальная линия"><Stroke d="M8 2v12" /></Tool>
        <Tool label="Горизонтальная линия"><Stroke d="M2 8h12" /></Tool>
        <Tool label="Трендовая линия"><Stroke d="M2 14L14 2" /></Tool>
        <Tool label="Канал"><Channel /></Tool>
        <Tool label="Фибоначчи"><Fibo /></Tool>
        <Tool label="Текст"><TextTool /></Tool>
        <Tool label="Метка"><TextTool boxed /></Tool>
        <Tool label="Стрелки" menu><Arrows /></Tool>
        <Sep />
        <Spacer />
        <Tool label="Поиск"><Search /></Tool>
        <Tool label="Чат"><Chat /></Tool>
      </ToolBar>
      <Desktop>
        <ChartWindow name="EURUSD,H1" data={eurusd} />
        <ChartWindow name="GBPUSD,H1" data={gbpusd} active />
      </Desktop>
      <TabBar>
        {tabs.map(([name, width], i) => <Tab key={name} $width={width} $active={i === 1}>{name}</Tab>)}
        <Spacer />
        <TabArrow aria-label="Назад">◀</TabArrow>
        <TabArrow aria-label="Вперёд">▶</TabArrow>
      </TabBar>
      <StatusBar>
        <StatusHint>Для вызова справки нажмите F1</StatusHint>
        <StatusCell $width={100}>F4u-many06=1x1x2-Many</StatusCell>
        <StatusCell $width={88} />
        <StatusCell $width={60} />
        <StatusCell $width={60} />
        <StatusCell $width={57} />
        <StatusCell $width={59} />
        <StatusCell $width={56} />
        <Traffic $width={107}>
          <svg width="22" height="12" viewBox="0 0 22 12" aria-hidden="true">
            {Array.from({ length: 8 }, (_, i) => (
              <g key={i}>
                <rect x={i * 3} y="0" width="2" height={9 - i} fill="#6f8f14" />
                <rect x={i * 3} y={9.500 - i} width="2" height={2 + i} fill="#17466e" />
              </g>
            ))}
          </svg>
          304/2 kb
        </Traffic>
      </StatusBar>
      <Watermark>
        <strong>Активация Windows</strong>
        Чтобы активировать Windows, перейдите в раздел "Параметры".
      </Watermark>
    </Page>
  )
}

export default App
